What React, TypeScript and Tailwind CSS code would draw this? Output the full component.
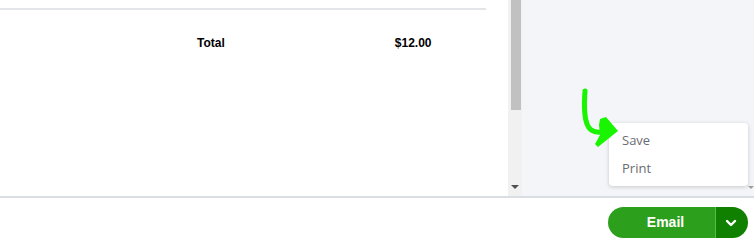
import React from "react";

export default function App() {
  return (
    <div className="w-[754px] h-[246px] flex flex-col bg-white overflow-hidden font-['Liberation_Sans',Arial,sans-serif]">
      {/* Top - preview and side area */}
      <div className="h-[196px] flex">
        {/* Invoice preview */}
        <div className="w-[508px] bg-white pt-2">
          <div className="w-[486px] h-[2px] bg-[#e3e5e8]" />
          <div className="flex items-center h-[22px] mt-[22px] text-[12px] font-bold text-black">
            <span className="ml-[197px]">Total</span>
            <span className="ml-[170px]">$12.00</span>
          </div>
        </div>

        {/* Scrollbar */}
        <div className="w-[14px] bg-[#f1f1f1] flex flex-col items-center">
          <div className="w-[10px] h-[110px] bg-[#c1c1c1] ml-[1px]" />
          <div className="flex-1" />
          <div className="mb-[7px] w-0 h-0 border-l-[4px] border-r-[4px] border-t-[4px] border-l-transparent border-r-transparent border-t-[#505050]" />
        </div>

        {/* Side area */}
        <div className="flex-1 bg-[#f4f5f8] relative">
          <div className="absolute right-0 top-0 bottom-0 w-[6px] flex flex-col items-center justify-end">
            <div className="mb-[7px] w-0 h-0 border-l-[3px] border-r-[3px] border-t-[3px] border-l-transparent border-r-transparent border-t-[#a0a0a0]" />
          </div>

          {/* Dropdown menu */}
          <div className="absolute left-[87px] top-[123px] w-[139px] h-[63px] bg-white rounded-[4px] shadow-[0_1px_4px_rgba(0,0,0,0.18)] flex flex-col justify-center gap-[8px] pl-[13px] pb-[2px] text-[13px] text-[#6b6c72] font-['Open_Sans',sans-serif]">
            <span className="leading-[20px]">Save</span>
            <span className="leading-[20px]">Print</span>
          </div>

          {/* Annotation arrow */}
          <svg className="absolute left-[58px] top-[88px]" width="42" height="62" viewBox="0 0 42 62">
            <path d="M5 3 C4 16 4 28 7 36 C9 42 14 45 22 44" fill="none" stroke="#19f500" strokeWidth="5" strokeLinecap="round" />
            <path d="M20 31 L26 29 L38 43 L18 59 L15 56 L20 47 L19 37 Z" fill="#19f500" />
          </svg>
        </div>
      </div>

      {/* Bottom bar */}
      <div className="h-[2px] bg-[#dadde1]" />
      <div className="flex-1 bg-white flex items-start justify-end pr-[6px] pt-[9px]">
        <div className="flex h-[31px] rounded-full overflow-hidden">
          <button className="w-[108px] bg-[#2ca01c] text-white text-[14px] font-bold pl-[8px] border-r border-r-[#5cb84c]">
            Email
          </button>
          <button className="w-[32px] bg-[#108000] flex items-center justify-center pr-[2px]">
            <svg width="12" height="12" viewBox="0 0 12 12">
              <path d="M2 4 L6 8 L10 4" fill="none" stroke="white" strokeWidth="2.4" strokeLinecap="round" strokeLinejoin="round" />
            </svg>
          </button>
        </div>
      </div>
    </div>
  );
}
